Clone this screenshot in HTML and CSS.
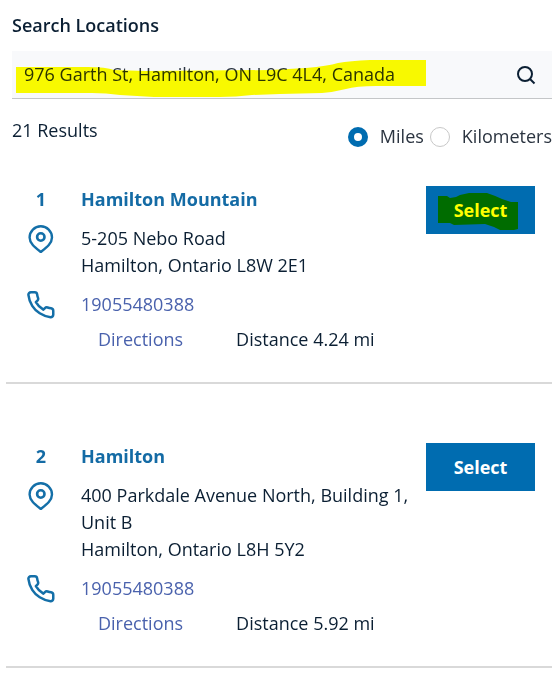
FILE: index.html
```html
<!DOCTYPE html>
<html lang="en">
<head>
    <meta charset="UTF-8">
    <meta name="viewport" content="width=device-width, initial-scale=1.0">
    <title>Search Locations</title>
    <link rel="stylesheet" href="styles.css">
</head>
<body>

    <!-- shared icons -->
    <svg class="sprite" aria-hidden="true">
        <symbol id="icon-pin" viewBox="0 0 28 28">
            <path stroke-width="2.4" d="M25 12.500C25 18.400 19.300 22.600 13.800 27C8.300 22.600 2.600 18.400 2.600 12.500a11.200 11.200 0 0 1 22.400 0z"/>
            <circle stroke-width="2.6" cx="13.800" cy="12" r="3.700"/>
        </symbol>
        <symbol id="icon-phone" viewBox="1 1 22.400 22.400">
            <path d="M22 16.920v3a2 2 0 0 1-2.180 2 19.790 19.790 0 0 1-8.630-3.070 19.500 19.500 0 0 1-6-6 19.790 19.790 0 0 1-3.070-8.670A2 2 0 0 1 4.110 2h3a2 2 0 0 1 2 1.720 12.840 12.840 0 0 0 .7 2.810 2 2 0 0 1-.45 2.110L8.090 9.910a16 16 0 0 0 6 6l1.270-1.270a2 2 0 0 1 2.110-.45 12.840 12.840 0 0 0 2.810.7A2 2 0 0 1 22 16.920z"/>
        </symbol>
    </svg>

    <main class="locator">
        <form class="search">
            <label class="search-label" for="location">Search Locations</label>
            <div class="search-box">
                <input type="text" id="location" class="search-input" value="976 Garth St, Hamilton, ON L9C 4L4, Canada">
                <button type="button" class="search-button" aria-label="Search">
                    <svg class="search-icon" viewBox="0 0 20 20"><circle cx="9" cy="9" r="7"/><path d="M14 14l4.500 4.500"/></svg>
                </button>
                <svg class="marker marker-search" viewBox="0 0 410 37" aria-hidden="true">
                    <path d="M0 7H72Q90 7 98 10L130 11L254 10L290 8Q312 6 322 3Q334 1 354 0H410V26H360Q340 26 330 29Q318 32 306 33L264 34L236 35Q220 37 204 37H138L104 35Q90 33 76 33H0z"/>
                </svg>
            </div>
        </form>

        <div class="results-bar">
            <span class="results-count">21 Results</span>
            <div class="units">
                <label class="unit"><input type="radio" name="unit" value="mi" checked>Miles</label>
                <label class="unit"><input type="radio" name="unit" value="km">Kilometers</label>
            </div>
        </div>

        <section class="results">
            <article class="location">
                <div class="details">
                    <span class="number">1</span>
                    <h2 class="name">Hamilton Mountain</h2>
                    <svg class="icon"><use href="#icon-pin"/></svg>
                    <p class="address">5-205 Nebo Road<br>Hamilton, Ontario L8W 2E1</p>
                    <svg class="icon"><use href="#icon-phone"/></svg>
                    <div class="contact">
                        <a class="phone" href="tel:19055480388">19055480388</a>
                        <div class="route">
                            <a class="directions" href="#">Directions</a>
                            <span>Distance 4.24 mi</span>
                        </div>
                    </div>
                </div>
                <div class="action">
                    <button type="button" class="select-button">Select</button>
                    <svg class="marker marker-select" viewBox="0 0 80 37" aria-hidden="true">
                        <path d="M0 3H9L12 5L18 4L22 2L31 0H49Q58 3 64 6L73 9H80V36L76 37H62L56 34L47 31L16 32L12 30H0z"/>
                    </svg>
                </div>
            </article>

            <article class="location">
                <div class="details">
                    <span class="number">2</span>
                    <h2 class="name">Hamilton</h2>
                    <svg class="icon"><use href="#icon-pin"/></svg>
                    <p class="address">400 Parkdale Avenue North, Building 1, Unit B<br>Hamilton, Ontario L8H 5Y2</p>
                    <svg class="icon"><use href="#icon-phone"/></svg>
                    <div class="contact">
                        <a class="phone" href="tel:19055480388">19055480388</a>
                        <div class="route">
                            <a class="directions" href="#">Directions</a>
                            <span>Distance 5.92 mi</span>
                        </div>
                    </div>
                </div>
                <div class="action">
                    <button type="button" class="select-button">Select</button>
                </div>
            </article>
        </section>
    </main>

</body>
</html>
```
FILE: styles.css
```css
* {
    box-sizing: border-box;
}
body {
    margin: 0;
    background: #fff;
    color: #0b1f33;
    font-family: "Open Sans", "Noto Sans", sans-serif;
    font-size: 18px;
    line-height: 27px;
}
a {
    color: #4a62ad;
    text-decoration: none;
}
h2, p {
    margin: 0;
}
button, input {
    font: inherit;
}
.sprite {
    display: none;
}
.locator {
    padding-top: 12px;
}

/* search */
.search {
    padding-left: 12px;
}
.search-label {
    display: block;
    margin-bottom: 12px;
    font-weight: 600;
}
.search-box {
    position: relative;
    display: flex;
    height: 48px;
    background: #f8f9fb;
    border-bottom: 1px solid #c4c6c8;
}
.search-input {
    flex: 1;
    min-width: 0;
    padding: 0 12px;
    border: none;
    background: none;
    color: #2b3440;
}
.search-button {
    display: flex;
    align-items: center;
    padding: 0 16px;
    border: none;
    background: none;
    cursor: pointer;
}
.search-icon {
    width: 20px;
    height: 20px;
    fill: none;
    stroke: #0b1f33;
    stroke-width: 2;
}

/* highlighter strokes */
.marker {
    position: absolute;
    fill: #ff0;
    mix-blend-mode: multiply;
    pointer-events: none;
}
.marker-search {
    left: 4px;
    top: 9px;
    width: 410px;
    height: 37px;
}
.marker-select {
    left: 12px;
    top: 7px;
    width: 80px;
    height: 37px;
}

/* results header */
.results-bar {
    display: flex;
    justify-content: space-between;
    padding: 18px 0 0 12px;
}
.units {
    display: flex;
    gap: 6px;
    padding-top: 6px;
    color: #2b3440;
}
.unit {
    display: flex;
    align-items: center;
    gap: 12px;
}
.unit input {
    appearance: none;
    width: 20px;
    height: 20px;
    margin: 0;
    border: 1px solid #c8c8c8;
    border-radius: 50%;
    background: #fff;
}
.unit input:checked {
    border: 6px solid #006cb0;
}

/* location list */
.results {
    padding-left: 6px;
}
.location {
    display: flex;
    align-items: flex-start;
    margin-bottom: 23px;
    padding: 36px 17px 29px 21px;
    border-bottom: 2px solid #d9d9d9;
}
.details {
    flex: 1;
    display: grid;
    grid-template-columns: 28px 1fr;
    column-gap: 26px;
    row-gap: 12px;
}
.number, .name {
    color: #146ba5;
    font-size: 18px;
    font-weight: 700;
}
.number {
    text-align: center;
}
.icon {
    width: 28px;
    height: 28px;
    fill: none;
    stroke: #146fa8;
    stroke-width: 2;
    stroke-linejoin: round;
}
.route {
    display: flex;
    gap: 53px;
    margin-top: 8px;
    padding-left: 17px;
}
.action {
    position: relative;
}
.select-button {
    min-width: 109px;
    height: 48px;
    border: none;
    background: #006cb0;
    color: #fff;
    font-weight: 700;
    cursor: pointer;
}
```
